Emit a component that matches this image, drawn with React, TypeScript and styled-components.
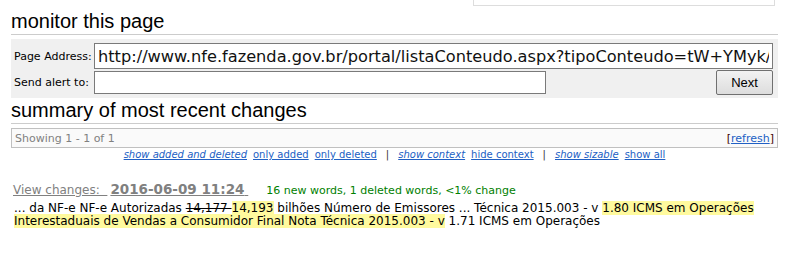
import * as React from 'react'
import styled, { createGlobalStyle } from 'styled-components'

const GlobalStyle = createGlobalStyle`
  body {
    margin: 0;
    background: #ffffff;
    font-family: 'DejaVu Sans', Verdana, sans-serif;
    color: #000000;
  }
`

const Page = styled.div`
  width: 767px;
  margin-left: 11px;
`

const TopBox = styled.div`
  width: 300px;
  height: 5px;
  margin-left: 462px;
  border: 1px solid #dddddd;
  border-top: none;
`

const Title = styled.h2`
  margin: ${({ $top }) => $top}px 0 0;
  padding: 0 0 3px;
  font: normal 20px/20px 'Liberation Sans', Arial, sans-serif;
  border-bottom: 1px solid #cccccc;
`

const FormPanel = styled.div`
  margin-top: 4px;
  background: #f0f0f0;
  padding: 4px 5px 3px 3px;
  display: grid;
  grid-template-columns: 80px 1fr;
  row-gap: 1px;
  align-items: center;
`

const Label = styled.label`
  font-size: 11px;
  white-space: nowrap;
`

const UrlInput = styled.input`
  box-sizing: border-box;
  width: 100%;
  height: 26px;
  margin: 0;
  padding: 0 3px;
  border: 1px solid #7a7a7a;
  font: 16.2px 'DejaVu Sans', Verdana, sans-serif;
  color: #111111;
  background: #ffffff;
`

const AlertRow = styled.div`
  display: flex;
  align-items: center;
  justify-content: space-between;
  height: 25px;
`

const EmailInput = styled.input`
  box-sizing: border-box;
  width: 452px;
  height: 23px;
  margin: 0;
  border: 1px solid #7a7a7a;
  background: #ffffff;
`

const NextButton = styled.button`
  box-sizing: border-box;
  width: 57px;
  height: 25px;
  margin: 0;
  padding: 0;
  border: 1px solid #707070;
  border-radius: 2px;
  background: linear-gradient(#f2f2f2, #dddddd);
  font: 13px 'Liberation Sans', Arial, sans-serif;
  color: #000000;
`

const StatusBar = styled.div`
  margin-top: 4px;
  box-sizing: border-box;
  height: 20px;
  border: 1px solid #c0c0c0;
  background: #fafafa;
  padding: 0 3px 0 3px;
  display: flex;
  align-items: center;
  justify-content: space-between;
  font-size: 11px;
  color: #808080;
`

const Bracket = styled.span`
  color: #400000;
`

const Link = styled.a`
  color: #2160c4;
  text-decoration: underline;
  font-style: ${({ $italic }) => ($italic ? 'italic' : 'normal')};
`

const ViewLinks = styled.div`
  display: flex;
  justify-content: center;
  gap: 6px;
  font-size: 10px;
  line-height: 13px;
`

const Divider = styled.span`
  color: #333333;
  margin: 0 3px;
`

const ChangeHeader = styled.div`
  margin-top: 20px;
  padding-left: 2px;
  display: flex;
  align-items: baseline;
`

const ViewLink = styled.a`
  color: #808080;
  text-decoration: underline;
  font-size: 12px;
  white-space: pre;
`

const Stamp = styled.b`
  font-size: 13.5px;
  margin-left: 3px;
`

const Stats = styled.span`
  margin-left: 18px;
  font-size: 11px;
  color: #008000;
`

const Excerpt = styled.p`
  margin: 5px 0 0;
  padding-left: 3px;
  font-size: 12px;
  line-height: 13px;
`

const Added = styled.span`
  background: #fffa9e;
`

const Removed = styled.del`
  text-decoration: line-through;
`

const viewOptions = [
  { text: 'show added and deleted', italic: true },
  { text: 'only added' },
  { text: 'only deleted' },
  { divider: true },
  { text: 'show context', italic: true },
  { text: 'hide context' },
  { divider: true },
  { text: 'show sizable', italic: true },
  { text: 'show all' },
]

const App = () => (
  <>
    <GlobalStyle />
    <Page>
      <TopBox />
      <Title $top={5}>monitor this page</Title>
      <FormPanel>
        <Label>Page Address:</Label>
        <UrlInput
          readOnly
          value="http://www.nfe.fazenda.gov.br/portal/listaConteudo.aspx?tipoConteudo=tW+YMyk/50s="
        />
        <Label>Send alert to:</Label>
        <AlertRow>
          <EmailInput />
          <NextButton>Next</NextButton>
        </AlertRow>
      </FormPanel>

      <Title $top={2}>summary of most recent changes</Title>
      <StatusBar>
        <span>Showing 1 - 1 of 1</span>
        <span>
          <Bracket>[</Bracket>
          <Link href="#">refresh</Link>
          <Bracket>]</Bracket>
        </span>
      </StatusBar>
      <ViewLinks>
        {viewOptions.map((opt, i) =>
          opt.divider ? (
            <Divider key={i}>|</Divider>
          ) : (
            <Link key={i} href="#" $italic={opt.italic}>
              {opt.text}
            </Link>
          )
        )}
      </ViewLinks>

      <ChangeHeader>
        <ViewLink href="#">
          View changes:  <Stamp>2016-06-09 11:24</Stamp>{' '}
        </ViewLink>
        <Stats>16 new words, 1 deleted words, &lt;1% change</Stats>
      </ChangeHeader>
      <Excerpt>
        ... da NF-e NF-e Autorizadas <Removed>14,177 </Removed>
        <Added>14,193</Added> bilhões Número de Emissores ... Técnica 2015.003 - v{' '}
        <Added>
          1.80 ICMS em Operações Interestaduais de Vendas a Consumidor Final Nota Técnica
          2015.003 - v
        </Added>{' '}
        1.71 ICMS em Operações
      </Excerpt>
    </Page>
  </>
)

export default App
